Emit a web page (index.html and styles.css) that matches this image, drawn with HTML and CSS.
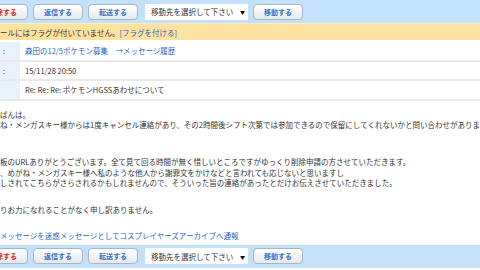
FILE: index.html
```html
<!DOCTYPE html>
<html lang="ja">
<head>
  <meta charset="UTF-8">
  <title>メッセージ詳細</title>
  <link rel="stylesheet" href="styles.css">
</head>
<body>
  <div class="page">
    <div class="toolbar">
      <button class="btn borrar">削除する</button>
      <button class="btn">返信する</button>
      <button class="btn">転送する</button>
      <div class="select"><span>移動先を選択して下さい</span><span class="flecha">▼</span></div>
      <button class="btn">移動する</button>
    </div>

    <div class="aviso">このメールにはフラグが付いていません。<a href="#">[フラグを付ける]</a></div>

    <table class="cabecera">
      <tr>
        <td class="etiqueta"><span class="nombre">差出人</span>:</td>
        <td><a href="#">森田の12/5ポケモン募集</a>　<a href="#">→メッセージ履歴</a></td>
      </tr>
      <tr>
        <td class="etiqueta"><span class="nombre">日時</span>:</td>
        <td>15/11/28 20:50</td>
      </tr>
      <tr>
        <td class="etiqueta"><span class="nombre">件名</span></td>
        <td>Re: Re: Re: ポケモンHGSSあわせについて</td>
      </tr>
    </table>

    <div class="cuerpo">
      <p>こんばんは。<br>めがね・メンガスキー様からは1度キャンセル連絡があり、その2時間後シフト次第では参加できるので保留にしてくれないかと問い合わせがありました。</p>
      <p>掲示板のURLありがとうございます。全て見て回る時間が無く惜しいところですがゆっくり削除申請の方させていただきます。<br>また、めがね・メンガスキー様へ私のような他人から謝罪文をかけなどと言われても応じないと思いますし<br>仕返しされてこちらがさらされるかもしれませんので、そういった旨の連絡があったとだけお伝えさせていただきました。</p>
      <p>あまりお力になれることがなく申し訳ありません。</p>
      <p><a href="#">このメッセージを迷惑メッセージとしてコスプレイヤーズアーカイブへ通報</a></p>
    </div>

    <div class="toolbar">
      <button class="btn borrar">削除する</button>
      <button class="btn">返信する</button>
      <button class="btn">転送する</button>
      <div class="select"><span>移動先を選択して下さい</span><span class="flecha">▼</span></div>
      <button class="btn">移動する</button>
    </div>
  </div>
</body>
</html>
```

FILE: styles.css
```css
body {
  margin: 0;
  overflow: hidden;
  font-family: "Noto Sans CJK JP", "Noto Sans", sans-serif;
  font-size: 7.5px;
  color: #333;
}

.page {
  margin-left: -40px;
  width: 560px;
}

a {
  color: #2d63c2;
  text-decoration: none;
}

.toolbar {
  display: flex;
  align-items: center;
  gap: 5px;
  height: 23px;
  padding-left: 18px;
  background: #c3e1f8;
}

.btn {
  width: 50px;
  height: 16px;
  padding: 0;
  border: 1px solid #a9b6c4;
  border-radius: 4px;
  background: linear-gradient(#ffffff, #e3e9f0);
  color: #3a70c6;
  font-family: inherit;
  font-size: 7px;
  font-weight: bold;
}

.btn.borrar {
  color: #e0281e;
}

.select {
  display: flex;
  justify-content: space-between;
  align-items: center;
  width: 103px;
  height: 16px;
  margin-left: 2px;
  padding: 0 3px 0 6px;
  box-sizing: border-box;
  background: #fff;
  color: #333;
}

.flecha {
  font-size: 5px;
  color: #000;
}

.aviso {
  height: 17px;
  line-height: 17px;
  padding-left: 17.5px;
  background: #fde2a0;
  border-top: 1px solid #f6eccb;
  box-sizing: border-box;
}

.cabecera {
  width: 100%;
  border-collapse: collapse;
  margin: 2px 0 0 17px;
}

.cabecera td {
  height: 17.5px;
  padding: 0 0 0 5px;
  border-bottom: 2px solid #e9e9e9;
  white-space: nowrap;
}

.cabecera .etiqueta {
  width: 43px;
  padding-left: 0;
  background: #e9f2fb;
}

.nombre {
  display: inline-block;
  width: 26px;
}

.cuerpo {
  width: 505px;
  padding: 9px 0 0 25px;
  line-height: 10.5px;
}

.cuerpo p {
  margin: 0 0 16px;
}

.cuerpo p:last-child {
  margin-bottom: 3px;
}
```
